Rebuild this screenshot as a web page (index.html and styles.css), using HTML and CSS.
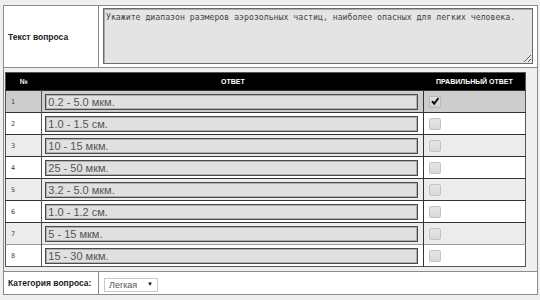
FILE: index.html
```html
<!DOCTYPE html>
<html lang="ru">

<head>
    <meta charset="UTF-8">
    <title>Редактирование вопроса</title>
    <link rel="stylesheet" href="styles.css">
</head>

<body>
    <table class="form">
        <tr class="question-row">
            <th class="label">Текст вопроса</th>
            <td class="field"><textarea class="question" readonly>Укажите диапазон размеров аэрозольных частиц, наиболее опасных для легких человека.</textarea></td>
        </tr>
        <tr>
            <td class="answers-cell" colspan="2">
                <table class="answers">
                    <thead>
                        <tr>
                            <th class="num">№</th>
                            <th>Ответ</th>
                            <th class="right">Правильный ответ</th>
                        </tr>
                    </thead>
                    <tbody>
                        <tr class="sel">
                            <td class="num">1</td>
                            <td class="ans"><input type="text" value="0.2 - 5.0 мкм." readonly></td>
                            <td class="chk"><span class="box on"><svg width="12" height="12" viewBox="0 0 12 12"><path d="M3 6.3 L5.2 8.6 L9.5 3" fill="none" stroke="#111" stroke-width="2"/></svg></span></td>
                        </tr>
                        <tr>
                            <td class="num">2</td>
                            <td class="ans"><input type="text" value="1.0 - 1.5 см." readonly></td>
                            <td class="chk"><span class="box"></span></td>
                        </tr>
                        <tr class="odd">
                            <td class="num">3</td>
                            <td class="ans"><input type="text" value="10 - 15 мкм." readonly></td>
                            <td class="chk"><span class="box"></span></td>
                        </tr>
                        <tr>
                            <td class="num">4</td>
                            <td class="ans"><input type="text" value="25 - 50 мкм." readonly></td>
                            <td class="chk"><span class="box"></span></td>
                        </tr>
                        <tr class="odd">
                            <td class="num">5</td>
                            <td class="ans"><input type="text" value="3.2 - 5.0 мкм." readonly></td>
                            <td class="chk"><span class="box"></span></td>
                        </tr>
                        <tr>
                            <td class="num">6</td>
                            <td class="ans"><input type="text" value="1.0 - 1.2 см." readonly></td>
                            <td class="chk"><span class="box"></span></td>
                        </tr>
                        <tr class="odd">
                            <td class="num">7</td>
                            <td class="ans"><input type="text" value="5 - 15 мкм." readonly></td>
                            <td class="chk"><span class="box"></span></td>
                        </tr>
                        <tr class="last">
                            <td class="num">8</td>
                            <td class="ans"><input type="text" value="15 - 30 мкм." readonly></td>
                            <td class="chk"><span class="box"></span></td>
                        </tr>
                    </tbody>
                </table>
            </td>
        </tr>
        <tr class="category-row">
            <th class="label">Категория вопроса:</th>
            <td class="field">
                <span class="select-wrap">
                    <select class="category">
                        <option>Легкая</option>
                        <option>Средняя</option>
                        <option>Сложная</option>
                    </select>
                </span>
            </td>
        </tr>
    </table>
</body>

</html>
```

FILE: styles.css
```css
* {
    padding: 0;
    margin: 0;
    box-sizing: border-box;
}
body {
    background: #efefef;
    font-family: "Liberation Sans", Arial, sans-serif;
}
.form {
    margin: 5px 0 0 3px;
    width: 535px;
    border-collapse: collapse;
    border: 1px solid #8c8c8c;
    background: #fff;
}
.form .label {
    width: 95px;
    padding-left: 4px;
    text-align: left;
    font-size: 8.5px;
    font-weight: bold;
    color: #222;
    border-right: 1px solid #8c8c8c;
    border-bottom: 1px solid #8c8c8c;
}
.form .field {
    padding: 2px 4px 3px 4px;
    border-bottom: 1px solid #8c8c8c;
}
.question-row {
    height: 62px;
}
.question {
    display: block;
    width: 430px;
    height: 56px;
    padding: 3px 2px;
    background: #e4e4e4;
    border: 1px solid #6a6a6a;
    box-shadow: inset 1px 1px 0 #aaa;
    font-family: "DejaVu Sans Mono", monospace;
    font-size: 8.2px;
    line-height: 11px;
    color: #444;
    resize: both;
    outline: none;
}
.answers-cell {
    background: #efefef;
    padding: 4px 11px 4px 1px;
    border-bottom: 1px solid #8c8c8c;
}
.answers {
    width: 521px;
    border-collapse: collapse;
    border: 1px solid #555;
    background: #fff;
}
.answers th {
    height: 18px;
    background: #000;
    color: #fff;
    font-size: 7px;
    font-weight: bold;
    text-transform: uppercase;
    text-align: center;
}
.answers th.num {
    width: 37px;
}
.answers th.right {
    width: 103px;
}
.answers td {
    height: 22px;
    border-top: 1px solid #333;
}
.answers tr.last td {
    border-top-color: #999;
}
.answers td.num {
    padding-left: 5px;
    font-family: "DejaVu Sans", sans-serif;
    font-size: 6.5px;
    color: #3a3a3a;
    border-right: 1px solid #555;
}
.answers td.ans {
    padding: 0 5px 0 3px;
    border-right: 1px solid #333;
}
.answers td.chk {
    padding-left: 5px;
}
.answers tr.sel {
    background: #cdcdcd;
}
.answers tr.odd {
    background: #ececec;
}
.ans input {
    display: block;
    width: 373px;
    height: 16px;
    padding: 0 2px;
    background: #e0e0e0;
    border: 1px solid #4a4a4a;
    box-shadow: inset 0 0 0 1px #b0b0b0;
    font-family: "Liberation Sans", Arial, sans-serif;
    font-size: 11px;
    color: #555;
    outline: none;
}
.box {
    display: block;
    width: 12px;
    height: 12px;
    border: 1px solid #c4c4c4;
    border-radius: 2px;
    background: linear-gradient(#e6e6e6, #d8d8d8);
    position: relative;
}
.box svg {
    position: absolute;
    left: -1px;
    top: -2px;
}
.box.on {
    border-color: #b8b8b8;
    background: linear-gradient(#e2e2e2, #d0d0d0);
}
.category-row {
    height: 20px;
}
.category-row .label {
    border-bottom: none;
}
.category-row .field {
    padding: 2px 4px 2px 5px;
    border-bottom: none;
}
.select-wrap {
    display: inline-block;
    position: relative;
}
.select-wrap::after {
    content: "▼";
    position: absolute;
    right: 5px;
    top: 3px;
    font-size: 6px;
    color: #111;
    pointer-events: none;
}
.category {
    display: block;
    appearance: none;
    -webkit-appearance: none;
    width: 54px;
    height: 14px;
    padding-left: 4px;
    border: 1px solid #c8c8c8;
    border-radius: 0;
    background: #fff;
    font-family: "Liberation Sans", Arial, sans-serif;
    font-size: 9px;
    color: #555;
}
```
